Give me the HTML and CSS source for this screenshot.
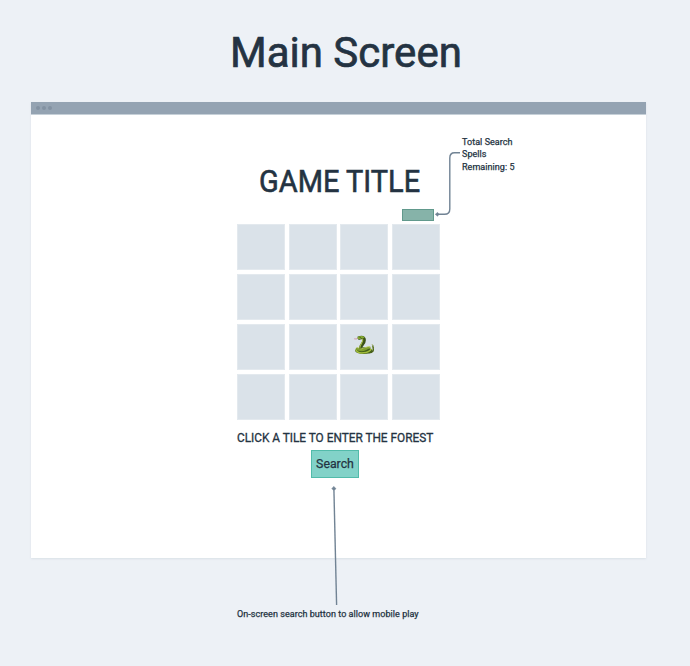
FILE: index.html
```html
<!DOCTYPE html>
<html lang="en">
<head>
<meta charset="utf-8">
<title>Main Screen</title>
<link rel="stylesheet" href="styles.css">
</head>
<body>
<h1 class="page-title"><span>Main Screen</span></h1>
<main class="window">
  <header class="titlebar"><i></i><i></i><i></i></header>
  <section class="game">
    <h2 class="game-title"><span>GAME TITLE</span></h2>
    <div class="counter"></div>
    <div class="board">
      <div class="tile"></div><div class="tile"></div><div class="tile"></div><div class="tile"></div>
      <div class="tile"></div><div class="tile"></div><div class="tile"></div><div class="tile"></div>
      <div class="tile"></div><div class="tile"></div>
      <div class="tile">
        <svg class="snake" width="22" height="20" viewBox="0 0 22 20">
          <path d="M1.2 3.8Q3 4.4 5 3.3" fill="none" stroke="#cf91a5" stroke-width=".9"/>
          <path d="M15.8 17Q19.8 17.4 19.6 14Q18.4 11.5 19.6 9.2Q21.6 11.6 20.8 16.2Q19 18.7 15.3 18.4Z" fill="#486015"/>
          <path d="M18.5 9.5Q20 9 20 11.2Q19.2 12.7 20 14.2" fill="none" stroke="#b7c58b" stroke-width=".7"/>
          <ellipse cx="10.8" cy="15.7" rx="8.7" ry="3.4" fill="#43601a"/>
          <path d="M2.9 14.4Q4.3 18.5 10.5 17.8Q16.2 17.3 18.4 13.8" fill="none" stroke="#a2bd3b" stroke-width="1.5"/>
          <path d="M3.2 13.1Q7.5 16.7 12.7 14Q16.2 12 17.2 12.9" fill="none" stroke="#819f2e" stroke-width="2.3"/>
          <path d="M4 12.5Q8 15.2 12.2 12.7Q15.7 10.6 17 12.2" fill="none" stroke="#c0d55b" stroke-width=".8"/>
          <path d="M5 3.3Q11 1 11.2 5.1Q11.2 7.3 9.3 9.5Q7.4 11.8 8 13.1" fill="none" stroke="#3c5317" stroke-width="3.4"/>
          <path d="M4.2 2.9Q5.6 .4 8.9 1Q11 1.2 11.7 3Q8.6 2.7 7.2 4Q5.4 4.5 4.2 2.9Z" fill="#83a932"/>
          <path d="M9.6 3.5Q10.3 6 8.4 8.6Q6.7 11 7 12.8" fill="none" stroke="#a6bd48" stroke-width="1.1"/>
          <circle cx="7.1" cy="2.2" r=".5" fill="#26380e"/>
        </svg>
      </div>
      <div class="tile"></div>
      <div class="tile"></div><div class="tile"></div><div class="tile"></div><div class="tile"></div>
    </div>
    <p class="prompt"><span>CLICK A TILE TO ENTER THE FOREST</span></p>
    <button class="search"><span>Search</span></button>
  </section>
</main>
<p class="note note-spells">Total Search<br>Spells<br>Remaining: 5</p>
<p class="note note-search">On-screen search button to allow mobile play</p>
<svg class="connectors" width="690" height="666" viewBox="0 0 690 666">
  <g fill="none" stroke="#718394" stroke-width="1.4">
    <path d="M460 152.8H454.5Q449.8 152.8 449.8 158V209Q449.8 214.3 444.5 214.3H438"/>
    <path d="M336.6 605L333.9 489"/>
  </g>
  <path d="M435.3 214.3L437.6 212.4L438.8 214.3L437.6 216.2ZM333.8 486.4L336 488.8L333.9 490.2L331.8 488.8Z" fill="#718394" stroke="#718394" stroke-width=".6"/>
</svg>
</body>
</html>
```

FILE: styles.css
```css
* { box-sizing: border-box; }
body {
  position: relative;
  margin: 0;
  width: 690px;
  height: 666px;
  overflow: hidden;
  background: #edf1f6;
  color: #243342;
  font-family: Roboto, "Liberation Sans", sans-serif;
}
h1, h2, p { margin: 0; white-space: nowrap; }
h1 span, h2 span, .prompt span {
  display: inline-block;
  transform-origin: 0 50%;
}
.page-title {
  height: 102px;
  padding: 28px 0 0 230px;
  font-size: 42px;
  line-height: 50px;
  font-weight: 400;
  -webkit-text-stroke: .7px #243342;
}
.window {
  width: 615px;
  height: 456px;
  margin-left: 31px;
  background: #fff;
  box-shadow: 0 1px 2px #d9e0e6;
}
.titlebar {
  display: flex;
  gap: 2px;
  height: 13px;
  padding: 4px 0 0 5px;
  background: #94a3b2;
  border-bottom: 1px solid #c6d0d8;
}
.titlebar i {
  width: 4px;
  height: 4px;
  border-radius: 50%;
  background: #8292a2;
}
.game {
  display: flex;
  flex-direction: column;
  width: 203px;
  margin-left: 206px;
  padding-top: 48px;
}
.game-title {
  height: 46px;
  padding-left: 22px;
  font-size: 31px;
  line-height: 37px;
  font-weight: 400;
  -webkit-text-stroke: .6px #243342;
}
.game-title span { transform: scaleX(.935); }
.counter {
  width: 32px;
  height: 12px;
  margin: 0 0 3px 165px;
  background: #86b3a9;
  border: 1px solid #61998c;
}
.board {
  display: grid;
  grid-template-columns: 52px 51px 52px 48px;
  grid-auto-rows: 46px;
  row-gap: 4px;
}
.tile {
  display: flex;
  width: 48px;
  padding: 10px 0 0 12px;
  background: #dae2e9;
  border: 1px solid #e3e9ee;
}
.prompt {
  height: 30px;
  padding-top: 10px;
  font-size: 12.5px;
  line-height: 15px;
  font-weight: 400;
  -webkit-text-stroke: .3px #243342;
}
.prompt span { transform: scaleX(.945); }
.search {
  width: 48px;
  height: 28px;
  margin-left: 74px;
  padding: 0;
  background: #82d2c8;
  border: 1px solid #52bbaa;
  color: #243342;
  font: 400 12.3px/26px Roboto, sans-serif;
  -webkit-text-stroke: .25px #243342;
  white-space: nowrap;
}
.note {
  position: absolute;
  font-size: 9px;
  line-height: 12.4px;
  letter-spacing: .05px;
  -webkit-text-stroke: .25px #243342;
}
.note-spells { left: 462px; top: 136px; }
.note-search { left: 237px; top: 608px; }
.connectors { position: absolute; left: 0; top: 0; pointer-events: none; }
```
